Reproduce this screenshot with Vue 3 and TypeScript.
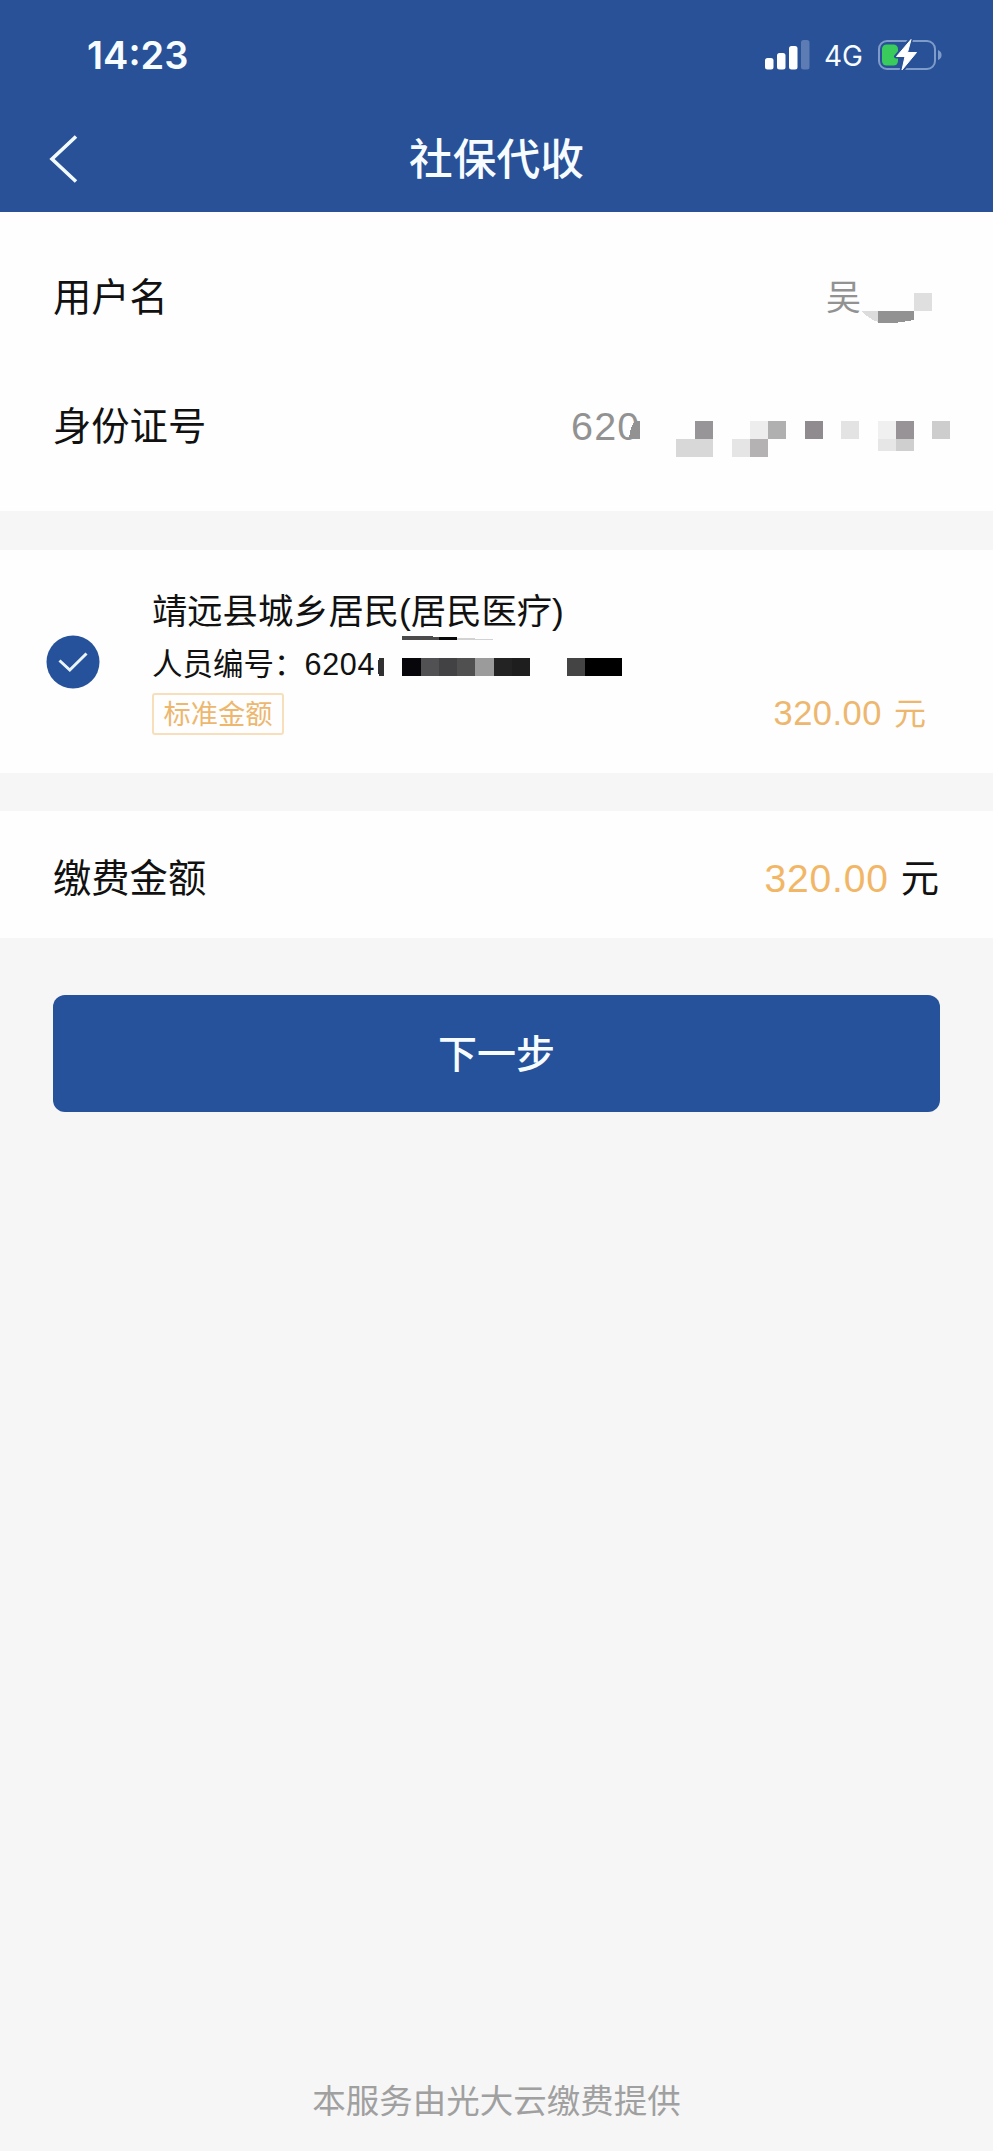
<script setup lang="ts">
interface Block {
  x: number
  y: number
  w: number
  h: number
  fill: string
}

const profileBlocks: Block[] = [
  { x: 914, y: 81, w: 18, h: 18, fill: '#dfdfdf' },
  { x: 695, y: 209, w: 18, h: 18, fill: '#979597' },
  { x: 676, y: 227, w: 37, h: 18, fill: '#d8d8d8' },
  { x: 750, y: 209, w: 18, h: 18, fill: '#ededed' },
  { x: 768, y: 209, w: 18, h: 18, fill: '#b0b0b0' },
  { x: 732, y: 227, w: 18, h: 18, fill: '#e5e5e5' },
  { x: 750, y: 227, w: 18, h: 18, fill: '#b4b2b3' },
  { x: 805, y: 209, w: 18, h: 18, fill: '#8f8b8e' },
  { x: 841, y: 209, w: 18, h: 18, fill: '#e3e3e3' },
  { x: 878, y: 209, w: 18, h: 18, fill: '#f0f0f0' },
  { x: 896, y: 209, w: 18, h: 18, fill: '#989396' },
  { x: 878, y: 227, w: 18, h: 12, fill: '#e6e6e6' },
  { x: 896, y: 227, w: 18, h: 12, fill: '#cfcfcf' },
  { x: 932, y: 209, w: 18, h: 18, fill: '#cdcdcd' },
]

const planBlocks: Block[] = [
  { x: 402, y: 108, w: 19, h: 18, fill: '#06060b' },
  { x: 421, y: 108, w: 18, h: 18, fill: '#515154' },
  { x: 439, y: 108, w: 18, h: 18, fill: '#424244' },
  { x: 457, y: 108, w: 18, h: 18, fill: '#505051' },
  { x: 475, y: 108, w: 19, h: 18, fill: '#9b9b9b' },
  { x: 494, y: 108, w: 18, h: 18, fill: '#232323' },
  { x: 512, y: 108, w: 18, h: 18, fill: '#1e1e1e' },
  { x: 567, y: 108, w: 18, h: 18, fill: '#444445' },
  { x: 585, y: 108, w: 37, h: 18, fill: '#000' },
]
</script>

<template>
  <main class="page">
    <header class="header">
      <div class="status">
        <span class="time">14:23</span>
        <div class="indicators">
          <svg class="signal" width="45" height="30" viewBox="0 0 45 30">
            <rect x="0" y="18" width="8.5" height="11.5" rx="2.5" fill="#fff" />
            <rect x="12" y="13" width="8.5" height="16.5" rx="2.5" fill="#fff" />
            <rect x="24" y="6" width="8.5" height="23.5" rx="2.5" fill="#fff" />
            <rect x="36" y="0" width="8.5" height="29.5" rx="2.5" fill="#5c7cb3" />
          </svg>
          <span class="network">4G</span>
          <svg class="battery" width="66" height="36" viewBox="0 0 66 36">
            <rect x="1" y="4" width="56" height="28" rx="8" fill="none" stroke="#7f9bc9" stroke-width="2" />
            <path d="M60 13q3.6 1.500 3.600 5t-3.600 5z" fill="#7f9bc9" />
            <rect x="4" y="7.500" width="16" height="21" rx="4.500" fill="#39cb5b" />
            <path d="M33 2 18 19.500h8.500L23.500 34 39 15.500h-9z" fill="#fff" stroke="#285197" stroke-width="4" stroke-linejoin="round" />
            <path d="M33 2.500 18.500 19.500h8.500L24 33 38.500 15.500h-9z" fill="#fff" stroke="#fff" stroke-width="1" stroke-linejoin="round" />
          </svg>
        </div>
      </div>
      <nav class="nav">
        <svg class="back" width="29" height="48" viewBox="0 0 29 48">
          <path d="M27 1.500 3 24 27 46.500" fill="none" stroke="#f2fbff" stroke-width="3.600" />
        </svg>
        <h1>社保代收</h1>
      </nav>
    </header>

    <section class="profile">
      <div class="row">
        <span>用户名</span>
        <span class="value name">吴</span>
      </div>
      <div class="row">
        <span>身份证号</span>
        <span class="value number">620</span>
      </div>
      <svg class="mosaic" width="993" height="299" viewBox="0 0 993 299" shape-rendering="crispEdges">
        <path d="M861 99h17v11q-9-3-17-11z" fill="#dcdcdc" />
        <path d="M878 99h36v9q-18 4-36 3z" fill="#929292" />
        <path d="M629 227q1-14 7-18h4v18z" fill="#929292" />
        <rect v-for="(b, i) in profileBlocks" :key="i" :x="b.x" :y="b.y" :width="b.w" :height="b.h" :fill="b.fill" />
      </svg>
    </section>

    <section class="plan">
      <svg class="check" width="54" height="54" viewBox="0 0 54 54">
        <circle cx="27" cy="27" r="26.500" fill="#25529a" />
        <path d="M13.500 25.500 23.800 35 40.500 18.500" fill="none" stroke="#e9f6ff" stroke-width="3" />
      </svg>
      <div class="details">
        <div class="plan-name">靖远县城乡居民(居民医疗)</div>
        <div class="person">人员编号：<span class="code">6204</span></div>
        <div class="fee">
          <span class="tag">标准金额</span>
          <span class="price"><span class="digits">320.00</span><span class="unit">元</span></span>
        </div>
      </div>
      <svg class="mosaic" width="993" height="223" viewBox="0 0 993 223" shape-rendering="crispEdges">
        <path d="M402 86q18-1 37 1v3h-37z" fill="#4b4b4b" />
        <path d="M439 87h18v3h-18z" fill="#080808" />
        <path d="M457 88l36 1v1h-36z" fill="#d2d2d2" />
        <path d="M379 108h5v18h-5q-3-9 0-18z" fill="#303030" />
        <rect v-for="(b, i) in planBlocks" :key="i" :x="b.x" :y="b.y" :width="b.w" :height="b.h" :fill="b.fill" />
      </svg>
    </section>

    <section class="total">
      <span>缴费金额</span>
      <span class="sum"><span class="digits">320.00</span><span class="unit">元</span></span>
    </section>

    <button class="next" type="button">下一步</button>

    <footer class="footer">本服务由光大云缴费提供</footer>
  </main>
</template>

<style>
body {
  margin: 0;
  background: #f6f6f6;
}
</style>

<style scoped>
.page {
  display: flex;
  flex-direction: column;
  width: 993px;
  height: 2151px;
  overflow: hidden;
  background: #f6f6f6;
  color: #111;
  font-family: "Liberation Sans", "Noto Sans CJK SC", sans-serif;
  font-size: 38.3px;
}
.header {
  height: 212px;
  flex: none;
  background: #285197;
  color: #f6fcff;
}
.status {
  height: 110px;
  display: flex;
  justify-content: space-between;
  padding: 0 49px 0 87px;
  box-sizing: border-box;
  font-family: Inter, sans-serif;
}
.time {
  font-size: 38px;
  font-weight: 600;
  line-height: 110px;
}
.indicators {
  display: flex;
  align-items: center;
  height: 110px;
}
.network {
  width: 54px;
  margin-left: 14px;
  font-size: 28px;
  line-height: 114px;
  padding-top: 2px;
}
.nav {
  display: grid;
  grid-template-columns: 100px 1fr 100px;
  align-items: center;
  height: 97px;
}
.back {
  margin-left: 49px;
}
h1 {
  margin: 2px 0 0;
  text-align: center;
  font-size: 43.7px;
  font-weight: 500;
  line-height: 60px;
}
.profile {
  position: relative;
  flex: none;
  height: 299px;
  padding: 21px 53px 0;
  box-sizing: border-box;
  background: #fefefe;
}
.row {
  display: flex;
  justify-content: space-between;
  line-height: 129px;
}
.value {
  color: #929292;
}
.name {
  width: 114px;
  font-size: 35px;
}
.number {
  width: 369px;
  font-size: 39.5px;
  letter-spacing: 1.2px;
}
.mosaic {
  position: absolute;
  left: 0;
  top: 0;
}
.plan {
  position: relative;
  display: flex;
  flex: none;
  height: 223px;
  margin-top: 39px;
  background: #fefefe;
}
.check {
  margin: 85px 52px 0 46px;
}
.details {
  flex: 1;
  padding-top: 37px;
}
.plan-name {
  font-size: 35.3px;
  line-height: 50px;
}
.person {
  font-size: 30.5px;
  line-height: 54px;
}
.code {
  letter-spacing: 0.7px;
}
.fee {
  display: flex;
  justify-content: space-between;
  align-items: center;
  height: 45px;
  padding-right: 67px;
  color: #edb76f;
}
.tag {
  width: 132px;
  height: 42px;
  box-sizing: border-box;
  border: 2px solid #f8dfbc;
  border-radius: 3px;
  text-align: center;
  font-size: 27.2px;
  line-height: 39px;
}
.price {
  display: flex;
  align-items: baseline;
  gap: 12px;
  font-size: 34.5px;
  line-height: 44px;
}
.price .digits {
  letter-spacing: 0.5px;
}
.price .unit {
  font-size: 32px;
}
.total {
  display: flex;
  flex: none;
  justify-content: space-between;
  height: 127px;
  margin-top: 38px;
  padding: 0 54px 0 53px;
  background: #fefefe;
  line-height: 135px;
}
.sum {
  display: flex;
  gap: 12px;
}
.sum .digits {
  color: #f2b667;
  font-size: 39px;
  letter-spacing: 0.8px;
}
.next {
  flex: none;
  width: 887px;
  height: 117px;
  margin: 57px 53px 0;
  padding: 0 0 5px;
  border: 0;
  border-radius: 12px;
  background: #25529a;
  color: #f6fcff;
  font-family: inherit;
  font-size: 39px;
  font-weight: 500;
}
.footer {
  margin-top: auto;
  height: 100px;
  text-align: center;
  color: #a0a0a0;
  font-size: 33.5px;
  line-height: 101px;
}
</style>
